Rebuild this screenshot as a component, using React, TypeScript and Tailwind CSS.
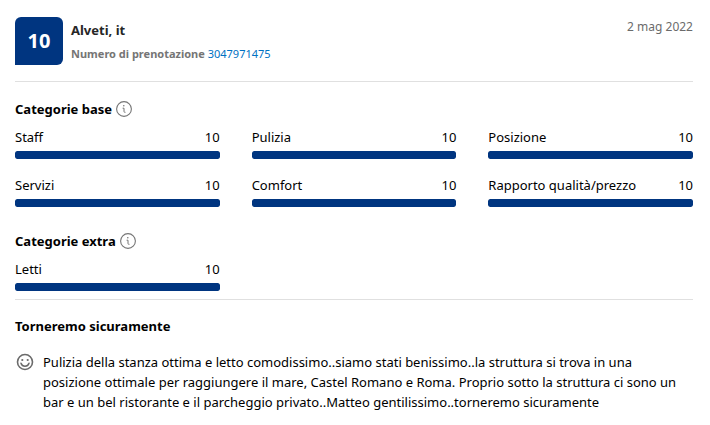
interface Score {
  label: string;
  value: number;
}

const BASE_SCORES: Score[] = [
  { label: "Staff", value: 10 },
  { label: "Pulizia", value: 10 },
  { label: "Posizione", value: 10 },
  { label: "Servizi", value: 10 },
  { label: "Comfort", value: 10 },
  { label: "Rapporto qualità/prezzo", value: 10 },
];

const EXTRA_SCORES: Score[] = [{ label: "Letti", value: 10 }];

function InfoIcon() {
  return (
    <svg width="16" height="16" viewBox="0 0 16 16" fill="none" stroke="#757575" aria-hidden="true">
      <circle cx="8" cy="8" r="7.4" strokeWidth="1.1" />
      <circle cx="7.8" cy="4.700" r="0.8" fill="#757575" stroke="none" />
      <path d="M7 7.200h1v3.300c0 .5.200.8.7.8h.4" strokeWidth="1" strokeLinecap="round" strokeLinejoin="round" />
    </svg>
  );
}

function SmileIcon() {
  return (
    <svg className="shrink-0" width="20" height="20" viewBox="0 0 20 20" fill="none" aria-hidden="true">
      <circle cx="10" cy="10" r="7.5" stroke="#6b6b6b" strokeWidth="1.6" />
      <circle cx="7.3" cy="8" r="1.1" fill="#6b6b6b" />
      <circle cx="12.7" cy="8" r="1.1" fill="#6b6b6b" />
      <path d="M6 11.2c.6 1.9 2.1 3 4 3s3.4-1.1 4-3" stroke="#6b6b6b" strokeWidth="1.5" strokeLinecap="round" />
    </svg>
  );
}

function SectionHeading({ title }: { title: string }) {
  return (
    <div className="flex h-5 items-center gap-1">
      <h3 className="text-[13px] leading-5 font-bold">{title}</h3>
      <button type="button" aria-label={`Informazioni su ${title}`}>
        <InfoIcon />
      </button>
    </div>
  );
}

function ScoreGrid({ scores }: { scores: Score[] }) {
  return (
    <ul className="mt-2 grid grid-cols-3 gap-x-8 gap-y-4">
      {scores.map((s) => (
        <li key={s.label}>
          <div className="flex justify-between leading-5">
            <span>{s.label}</span>
            <span>{s.value}</span>
          </div>
          <div className="mt-1 h-2 overflow-hidden rounded-xs bg-[#e6e6e6]">
            <div className="h-full rounded-xs bg-[#003580]" style={{ width: `${s.value * 10}%` }} />
          </div>
        </li>
      ))}
    </ul>
  );
}

export default function App() {
  return (
    <article className="min-h-screen bg-white pt-[17px] pr-[17px] pb-3 pl-[15px] font-['Noto_Sans','Open_Sans',sans-serif] text-[13px] leading-5 text-black">
      <header className="flex items-start border-b border-[#e0e0e0] pb-4">
        <div className="flex size-12 items-center justify-center rounded-md rounded-bl-none bg-[#003580] text-xl font-bold text-white">
          10
        </div>
        <div className="ml-2 flex-1 pt-[3px]">
          <h2 className="text-[13px] leading-5 font-bold text-[#262626]">Alveti, it</h2>
          <p className="mt-1 text-[11px] leading-5 text-[#757575]">
            <span className="font-bold">Numero di prenotazione</span>{" "}
            <a href="#prenotazione" className="text-[#0071c2]">3047971475</a>
          </p>
        </div>
        <time dateTime="2022-05-02" className="text-xs leading-5 text-[#6b6b6b]">2 mag 2022</time>
      </header>

      <section className="mt-[17px]">
        <SectionHeading title="Categorie base" />
        <ScoreGrid scores={BASE_SCORES} />
      </section>

      <section className="mt-6 border-b border-[#e0e0e0] pb-2">
        <SectionHeading title="Categorie extra" />
        <ScoreGrid scores={EXTRA_SCORES} />
      </section>

      <section className="mt-4">
        <h3 className="text-[13px] leading-5 font-bold">Torneremo sicuramente</h3>
        <div className="mt-4 flex gap-2 pr-2">
          <SmileIcon />
          <p>
            Pulizia della stanza ottima e letto comodissimo..siamo stati benissimo..la struttura si trova in una
            posizione ottimale per raggiungere il mare, Castel Romano e Roma. Proprio sotto la struttura ci sono un
            bar e un bel ristorante e il parcheggio privato..Matteo gentilissimo..torneremo sicuramente
          </p>
        </div>
      </section>
    </article>
  );
}
